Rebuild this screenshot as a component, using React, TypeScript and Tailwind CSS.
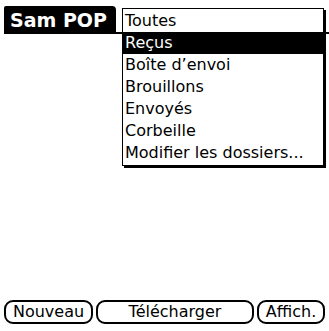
import React from "react";

const folders = [
  "Toutes",
  "Reçus",
  "Boîte d’envoi",
  "Brouillons",
  "Envoyés",
  "Corbeille",
  "Modifier les dossiers...",
];

const font = { fontFamily: '"DejaVu Sans", sans-serif' };

export default function App() {
  const selected = 1;

  return (
    <div
      className="relative flex h-[331px] w-[329px] flex-col overflow-hidden bg-white text-black"
      style={font}
    >
      {/* title bar */}
      <div className="flex items-end pl-[4px] pt-[6px]">
        <div className="flex h-[28px] items-center rounded-tr-[4px] rounded-tl-[2px] bg-black pl-[6px] pr-[9px] text-[19px] font-bold leading-none text-white">
          Sam POP
        </div>
        <div className="h-[2px] flex-1 bg-black" />
      </div>

      <div className="flex-1" />

      {/* buttons */}
      <div className="flex gap-[3px] px-[4px] pb-[7px]">
        <button className="flex h-[24px] w-[89px] items-center justify-center rounded-[9px] border-2 border-black text-[16px] leading-none">
          Nouveau
        </button>
        <button className="flex h-[24px] w-[158px] items-center justify-center rounded-[9px] border-2 border-black text-[16px] leading-none">
          Télécharger
        </button>
        <button className="flex h-[24px] flex-1 items-center justify-center rounded-[9px] border-2 border-black text-[16px] leading-none">
          Affich.
        </button>
      </div>

      {/* folder popup */}
      <div className="absolute left-[122px] top-[8px] w-[202px] border border-black bg-white py-[1px] shadow-[2px_2px_0_0_#000]">
        {folders.map((f, i) => (
          <div
            key={f}
            className={
              i === selected
                ? "flex h-[22px] items-center bg-black px-[2px] text-[16px] leading-none text-white"
                : "flex h-[22px] items-center px-[2px] text-[16px] leading-none"
            }
          >
            {f}
          </div>
        ))}
      </div>
    </div>
  );
}
